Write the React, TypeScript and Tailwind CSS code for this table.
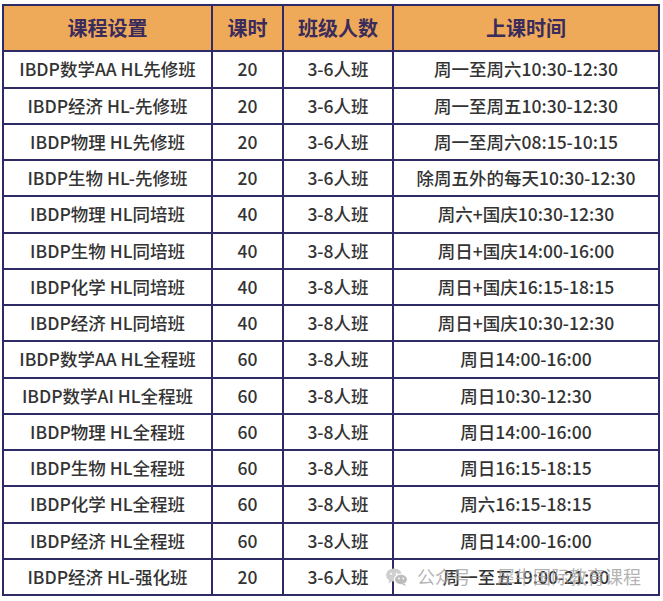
const rows: [string, string, string, string][] = [
  ['IBDP数学AA HL先修班', '20', '3-6人班', '周一至周六10:30-12:30'],
  ['IBDP经济 HL-先修班', '20', '3-6人班', '周一至周五10:30-12:30'],
  ['IBDP物理 HL先修班', '20', '3-6人班', '周一至周六08:15-10:15'],
  ['IBDP生物 HL-先修班', '20', '3-6人班', '除周五外的每天10:30-12:30'],
  ['IBDP物理 HL同培班', '40', '3-8人班', '周六+国庆10:30-12:30'],
  ['IBDP生物 HL同培班', '40', '3-8人班', '周日+国庆14:00-16:00'],
  ['IBDP化学 HL同培班', '40', '3-8人班', '周日+国庆16:15-18:15'],
  ['IBDP经济 HL同培班', '40', '3-8人班', '周日+国庆10:30-12:30'],
  ['IBDP数学AA HL全程班', '60', '3-8人班', '周日14:00-16:00'],
  ['IBDP数学AI HL全程班', '60', '3-8人班', '周日10:30-12:30'],
  ['IBDP物理 HL全程班', '60', '3-8人班', '周日14:00-16:00'],
  ['IBDP生物 HL全程班', '60', '3-8人班', '周日16:15-18:15'],
  ['IBDP化学 HL全程班', '60', '3-8人班', '周六16:15-18:15'],
  ['IBDP经济 HL全程班', '60', '3-8人班', '周日14:00-16:00'],
  ['IBDP经济 HL-强化班', '20', '3-6人班', '周一至五19:00-21:00'],
];

const tall = [0, 4, 8, 12];

function WeChatIcon() {
  return (
    <svg width="24" height="20" viewBox="0 0 24 20" fill="none">
      <ellipse cx="9" cy="8" rx="8" ry="6.6" fill="#cfcfcf" />
      <path d="M4 13 L3.5 16.5 L7.5 14 Z" fill="#cfcfcf" />
      <ellipse cx="16" cy="12.5" rx="6.6" ry="5.4" fill="#bdbdbd" stroke="#fff" strokeWidth="1.2" />
      <path d="M19.5 16.5 L21 19 L17 17.5 Z" fill="#bdbdbd" />
      <circle cx="6.2" cy="6.8" r="1" fill="#fff" />
      <circle cx="11.6" cy="6.8" r="1" fill="#fff" />
      <circle cx="14" cy="11.5" r="0.9" fill="#fff" />
      <circle cx="18.3" cy="11.5" r="0.9" fill="#fff" />
    </svg>
  );
}

export default function App() {
  return (
    <div
      className="relative w-[663px] h-[601px] bg-white pt-[4px] pl-[2px]"
      style={{ fontFamily: '"Noto Sans CJK SC", "Noto Sans", sans-serif' }}
    >
      <table className="w-[656px] border-collapse border-2 border-[#2d2a66] table-fixed">
        <colgroup>
          <col className="w-[209px]" />
          <col className="w-[71px]" />
          <col className="w-[110px]" />
          <col className="w-[266px]" />
        </colgroup>
        <thead>
          <tr className="h-[46px] bg-[#eeaa59] text-[#3a2b5c] text-[20px] font-bold">
            <th className="border-2 border-[#2d2a66] text-center">课程设置</th>
            <th className="border-2 border-[#2d2a66] text-center">课时</th>
            <th className="border-2 border-[#2d2a66] text-center">班级人数</th>
            <th className="border-2 border-[#2d2a66] text-center">上课时间</th>
          </tr>
        </thead>
        <tbody className="text-[#333333] text-[17.5px] font-medium">
          {rows.map((r, i) => (
            <tr key={i} className={tall.includes(i) ? 'h-[37px]' : 'h-[36px]'}>
              <td className="border-2 border-[#2d2a66] text-center whitespace-nowrap p-0">{r[0]}</td>
              <td className="border-2 border-[#2d2a66] text-center p-0">{r[1]}</td>
              <td className="border-2 border-[#2d2a66] text-center p-0">{r[2]}</td>
              <td className="border-2 border-[#2d2a66] text-center whitespace-nowrap p-0">{r[3]}</td>
            </tr>
          ))}
        </tbody>
      </table>
      <div className="absolute left-[385px] top-[563px] flex items-center gap-[8px] text-[18px] text-[#a0a0a0]/80 whitespace-nowrap">
        <WeChatIcon />
        <span>公众号 · 犀牛国际教育课程</span>
      </div>
    </div>
  );
}
